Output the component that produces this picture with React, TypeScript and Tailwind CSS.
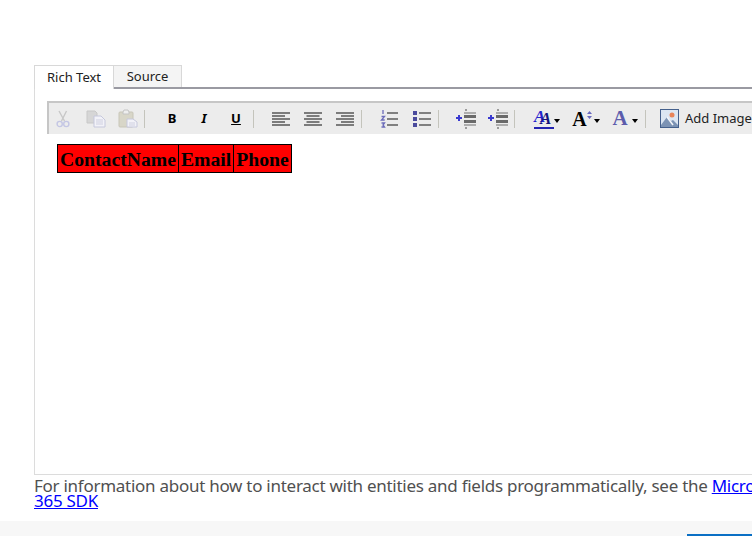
import type { ReactNode } from "react";

const sans = "font-['Noto_Sans','Open_Sans',sans-serif]";

function Sep() {
  return <div className="w-px h-[18px] bg-[#c4c4bc] shrink-0" />;
}

function Btn({ children, className = "" }: { children: ReactNode; className?: string }) {
  return <div className={`w-8 h-full flex items-center justify-center shrink-0 ${className}`}>{children}</div>;
}

function Caret() {
  return <span className="w-0 h-0 border-x-[3.5px] border-x-transparent border-t-[4px] border-t-black mt-1" />;
}

function CutIcon() {
  return (
    <svg width="14" height="18" viewBox="0 0 14 18" fill="none" stroke="#c6c6d4" strokeWidth="1.4">
      <path d="M3 1l5.5 10M10.5 1L5.5 11" stroke="#c8c8c8" />
      <circle cx="3.7" cy="14" r="2.6" stroke="#c4c6e4" />
      <circle cx="10.3" cy="14" r="2.6" stroke="#c4c6e4" />
    </svg>
  );
}

function CopyIcon() {
  return (
    <svg width="20" height="18" viewBox="0 0 20 18">
      <path d="M1 1h8l2 2v10H1z" fill="#d6d6d6" stroke="#c8c8c8" />
      <path d="M8 6h7l4 4v7H8z" fill="#f2f2f8" stroke="#c6c8dc" />
      <path d="M10 10h7M10 12h7M10 14h7" stroke="#cfd0e0" />
    </svg>
  );
}

function PasteIcon() {
  return (
    <svg width="20" height="19" viewBox="0 0 20 19">
      <rect x="1" y="3" width="14" height="15" rx="1" fill="#d8d6c8" stroke="#c8c6b8" />
      <path d="M5 3l1-2h4l1 2v2H5z" fill="#eeeeee" stroke="#c4c4c4" />
      <path d="M9 10h6l4 3v5H9z" fill="#f2f2f8" stroke="#c6c8dc" />
      <path d="M11 14h6M11 16h6" stroke="#cfd0e0" />
    </svg>
  );
}

function AlignIcon({ mode }: { mode: "left" | "center" | "right" }) {
  const rows = [18, 13, 18, 13, 18];
  return (
    <svg width="18" height="16" viewBox="0 0 18 16">
      {rows.map((w, i) => {
        const x = mode === "left" ? 0 : mode === "right" ? 18 - w : (18 - w) / 2;
        return <rect key={i} x={x} y={1 + i * 3} width={w} height="2" fill="#7c7c7c" />;
      })}
    </svg>
  );
}

function OlIcon() {
  return (
    <svg width="18" height="20" viewBox="0 0 18 20">
      <path d="M3 1v4M1.5 7.5h3l-3 3.5h3.2M1.5 14h3l-1.5 2 1.5 2h-3" fill="none" stroke="#6c6cba" strokeWidth="1.3" />
      <path d="M7 4h11M7 10h11M7 16h11" stroke="#808080" strokeWidth="2" />
    </svg>
  );
}

function UlIcon() {
  return (
    <svg width="18" height="18" viewBox="0 0 18 18">
      <rect x="0" y="1" width="4" height="4" fill="#4a4a9c" />
      <rect x="0" y="7" width="4" height="4" fill="#4a4a9c" />
      <rect x="0" y="13" width="4" height="4" fill="#4a4a9c" />
      <path d="M6 3h12M6 9h12M6 15h12" stroke="#808080" strokeWidth="2" />
    </svg>
  );
}

function IndentIcon() {
  return (
    <svg width="20" height="20" viewBox="0 0 20 20">
      <path d="M9 1h2M9 19h2" stroke="#808080" strokeWidth="1.5" />
      <path d="M8 4h12" stroke="#9a9a9a" strokeWidth="1.5" />
      <rect x="8" y="6" width="12" height="3" fill="#6a6a6a" />
      <rect x="8" y="11" width="12" height="3" fill="#6a6a6a" />
      <path d="M8 16h12" stroke="#9a9a9a" strokeWidth="1.5" />
      <path d="M0 9h6M3 6v6" stroke="#3a3ad0" strokeWidth="2" />
    </svg>
  );
}

function FontStyleIcon() {
  return (
    <div className="flex items-center">
      <div className="relative w-[20px] h-[20px] font-['Liberation_Serif',serif] font-bold italic leading-none">
        <span className="absolute left-0 -top-px text-[17px] text-[#2222cc]">A</span>
        <span className="absolute left-[6px] top-[1px] text-[17px] text-[#14147a]">A</span>
        <div className="absolute left-0 right-0 bottom-0 h-[2px] bg-[#2424b0]" />
      </div>
      <Caret />
    </div>
  );
}

function FontSizeIcon() {
  return (
    <div className="flex items-center gap-0.5">
      <span className="font-['Liberation_Serif',serif] font-bold text-[20px] leading-none text-black">A</span>
      <svg width="5" height="8" viewBox="0 0 5 8" className="-ml-0.5 -mt-2">
        <path d="M2.5 0L5 3H0zM2.5 8L0 5h5z" fill="#6a6ac0" />
      </svg>
      <Caret />
    </div>
  );
}

function FontColorIcon() {
  return (
    <div className="flex items-center gap-1">
      <span className="font-['Liberation_Serif',serif] font-bold text-[21px] leading-none text-[#5c5cac]">A</span>
      <Caret />
    </div>
  );
}

function ImageIcon() {
  return (
    <svg width="19" height="19" viewBox="0 0 19 19" className="shrink-0">
      <rect x="0.5" y="0.5" width="18" height="18" fill="#dce6f2" stroke="#44608c" />
      <circle cx="12" cy="6" r="2.5" fill="#e8845a" />
      <path d="M1 16l6-8 4 4 2-1 5 5v2H1z" fill="#7c93b4" />
      <path d="M7 8l6 8" stroke="#f4f6fa" strokeWidth="1.5" />
    </svg>
  );
}

export default function App() {
  return (
    <div className={`w-[752px] h-[536px] overflow-hidden bg-white flex flex-col ${sans}`}>
      <div className="flex-1 pt-[65px] pl-[34px]">
        <div className="w-[900px]">
          {/* tabs */}
          <div className="flex h-6 text-[13px] text-[#222]">
            <div className="w-20 h-6 flex items-center justify-center bg-white border border-b-0 border-[#d8d8d8] z-10">
              Rich Text
            </div>
            <div className="flex-1 border-b-2 border-[#9a9aa2]">
              <div className="w-[68px] h-[22px] flex items-center justify-center bg-[#f4f4f4] border border-l-0 border-b-0 border-[#d8d8d8]">
                Source
              </div>
            </div>
          </div>

          {/* editor */}
          <div className="h-[386px] border border-t-0 border-[#dcdcdc] pl-3 pt-3">
            <div className="flex items-center h-[33px] bg-[#ececec] border-t-2 border-l-2 border-[#c6c6c6]">
              <Btn className="-ml-0.5"><CutIcon /></Btn>
              <Btn className="ml-px"><CopyIcon /></Btn>
              <Btn><PasteIcon /></Btn>
              <Sep />
              <div className="w-[11px]" />
              <Btn><span className="text-[13px] font-bold text-black">B</span></Btn>
              <Btn><span className="text-[13px] font-bold italic text-black">I</span></Btn>
              <Btn className="mr-px"><span className="text-[13px] font-bold underline text-black">U</span></Btn>
              <Sep />
              <div className="w-[11px]" />
              <Btn><AlignIcon mode="left" /></Btn>
              <Btn><AlignIcon mode="center" /></Btn>
              <Btn><AlignIcon mode="right" /></Btn>
              <Sep />
              <div className="w-[11px]" />
              <Btn className="mr-px"><OlIcon /></Btn>
              <Btn><UlIcon /></Btn>
              <Sep />
              <div className="w-[11px]" />
              <Btn><IndentIcon /></Btn>
              <Btn><IndentIcon /></Btn>
              <Sep />
              <div className="w-3" />
              <Btn className="w-[40px]"><FontStyleIcon /></Btn>
              <Btn className="w-[38px]"><FontSizeIcon /></Btn>
              <Btn className="w-[40px]"><FontColorIcon /></Btn>
              <Sep />
              <div className="w-[14px]" />
              <ImageIcon />
              <span className="ml-1.5 text-[13px] text-[#222] whitespace-nowrap">Add Image</span>
            </div>

            <table className="mt-[10px] ml-2.5 border-collapse bg-[#ff0000] font-['Liberation_Serif',serif] font-bold text-[19.7px] leading-[23px] text-black">
              <tbody>
                <tr>
                  <td className="border border-black px-[2px] pt-[3px] pb-[1px]">ContactName</td>
                  <td className="border border-black px-[2px] pt-[3px] pb-[1px]">Email</td>
                  <td className="border border-black px-[2px] pt-[3px] pb-[1px]">Phone</td>
                </tr>
              </tbody>
            </table>
          </div>

          {/* help text */}
          <p className="text-[17px] tracking-[-0.27px] leading-[15px] text-[#505050] mt-[3px] whitespace-nowrap">
            For information about how to interact with entities and fields programmatically, see the{" "}
            <a href="#" className="text-[#0000ff] underline">Microsoft Dynamics<br />365 SDK</a>
          </p>
        </div>
      </div>

      {/* footer */}
      <div className="h-[15px] bg-[#f7f7f7] flex justify-end items-end">
        <div className="w-[65px] h-0.5 bg-[#0a6fc4]" />
      </div>
    </div>
  );
}
